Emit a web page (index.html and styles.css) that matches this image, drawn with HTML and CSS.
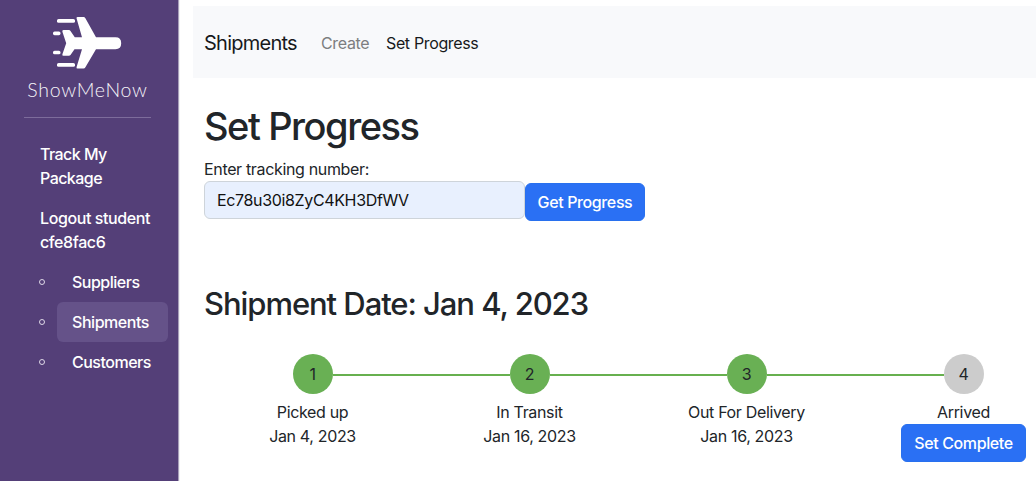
FILE: index.html
```html
<!DOCTYPE html>
<html lang="en">
<head>
<meta charset="utf-8">
<title>ShowMeNow</title>
<link rel="stylesheet" href="styles.css">
</head>
<body>
<div class="app">
  <aside class="sidebar">
    <div class="brand">
      <svg class="logo" width="70" height="54" viewBox="0 0 70 54">
        <g fill="#fff">
          <path d="M24.500 1h6q1.200 0 1.900 1.300L43 21.300H62.500q5.700 0 5.700 5.900t-5.700 6H43L32.400 51.200Q31.700 52.500 30.500 52.500h-6q-1.400 0-.9-1.600L29 33.200H21.500L17.500 39q-.6.700-1.600.7H10.500q-1.600 0-1.100-1.500l3.800-11L9.400 15.700q-.5-1.600 1.100-1.600h5.400q1 0 1.600.8l4.300 6.400H29L23.600 2.600q-.5-1.600.9-1.600z"/>
          <rect x="4" y="3" width="18" height="3.800" rx="1.600"/>
          <rect x="0" y="15.600" width="7.500" height="3.600" rx="1.600"/>
          <rect x="0" y="34.700" width="7.500" height="3.600" rx="1.600"/>
          <rect x="4" y="47" width="18" height="3.800" rx="1.600"/>
        </g>
      </svg>
      <div class="brand-name">ShowMeNow</div>
    </div>
    <nav class="menu">
      <a class="menu-link track">Track My<br>Package</a>
      <a class="menu-link logout">Logout student<br>cfe8fac6</a>
      <ul class="submenu">
        <li class="subitem"><a class="sublink suppliers">Suppliers</a></li>
        <li class="subitem"><a class="sublink active">Shipments</a></li>
        <li class="subitem"><a class="sublink customers">Customers</a></li>
      </ul>
    </nav>
  </aside>
  <main class="main">
    <nav class="navbar">
      <a class="nav-brand">Shipments</a>
      <a class="nav-link muted">Create</a>
      <a class="nav-link current">Set Progress</a>
    </nav>
    <section class="content">
      <h1 class="title">Set Progress</h1>
      <label class="label" for="tracking">Enter tracking number:</label>
      <div class="form-row">
        <input class="input" id="tracking" type="text" value="Ec78u30i8ZyC4KH3DfWV">
        <button class="btn get">Get Progress</button>
      </div>
      <h2 class="subtitle">Shipment Date: Jan 4, 2023</h2>
      <div class="steps">
        <div class="step">
          <div class="marker"><i class="line none"></i><span class="dot">1</span><i class="line"></i></div>
          <div class="name picked">Picked up</div>
          <div class="date">Jan 4, 2023</div>
        </div>
        <div class="step">
          <div class="marker"><i class="line"></i><span class="dot">2</span><i class="line"></i></div>
          <div class="name">In Transit</div>
          <div class="date">Jan 16, 2023</div>
        </div>
        <div class="step">
          <div class="marker"><i class="line"></i><span class="dot">3</span><i class="line"></i></div>
          <div class="name">Out For Delivery</div>
          <div class="date">Jan 16, 2023</div>
        </div>
        <div class="step">
          <div class="marker"><i class="line"></i><span class="dot pending">4</span><i class="line none"></i></div>
          <div class="name arrived">Arrived</div>
          <button class="btn complete">Set Complete</button>
        </div>
      </div>
    </section>
  </main>
</div>
</body>
</html>
```
FILE: styles.css
```css
* { box-sizing: border-box; }
body {
  margin: 0;
  overflow: hidden;
  background: #fff;
  color: #212529;
  font: 400 16px/24px Inter, "Liberation Sans", sans-serif;
  letter-spacing: -0.34px;
}
.app { display: flex; height: 481px; }
.sidebar {
  flex: none;
  width: 178px;
  background: #543f78;
  box-shadow: 1px 0 1px rgba(60, 40, 100, 0.45);
  color: #fff;
}
.brand {
  display: flex;
  flex-direction: column;
  align-items: center;
  width: 127px;
  height: 118px;
  margin-left: 24px;
  padding-top: 16px;
  border-bottom: 1px solid #7d6c9b;
}
.logo { flex: none; margin-left: 1px; }
.brand-name {
  margin-top: 8px;
  color: #f6f4f9;
  font: 300 19.5px/24px Lato, sans-serif;
  letter-spacing: 0.75px;
  white-space: nowrap;
}
.menu { padding-top: 16px; font-weight: 500; letter-spacing: -0.4px; }
.menu-link { display: block; padding: 8px 0 8px 40px; white-space: nowrap; }
.track { letter-spacing: -0.55px; }
.submenu { margin: 0; padding: 0; list-style: none; }
.subitem { display: flex; align-items: center; height: 40px; padding-left: 39px; }
.subitem::before {
  content: "";
  flex: none;
  box-sizing: border-box;
  width: 6px;
  height: 6px;
  margin-right: 12px;
  border: 1px solid #ddd7e6;
  border-radius: 50%;
}
.sublink { width: 111px; padding: 8px 15px; border-radius: 6px; letter-spacing: -0.5px; }
.active { background: #655289; letter-spacing: -0.45px; }
.main { flex: 1; min-width: 0; padding: 6px 0 0 15px; }
.navbar {
  display: flex;
  align-items: center;
  height: 72px;
  padding: 1px 0 0 11px;
  background: #f8f9fb;
}
.nav-brand { width: 117px; font-size: 20px; color: #17191b; letter-spacing: -0.75px; }
.nav-link { width: 65px; white-space: nowrap; }
.muted { color: #7d7e80; }
.current { width: auto; color: #17191b; letter-spacing: -0.36px; }
.content { padding: 24px 0 0 11px; }
.title { margin: 0 0 7px; font-size: 38px; line-height: 48px; font-weight: 500; letter-spacing: -1.45px; }
.label { display: block; }
.form-row { display: flex; align-items: flex-start; }
.input {
  width: 321px;
  height: 38px;
  padding: 6px 12px;
  border: 1px solid #ced4da;
  border-radius: 6px;
  background: #e8f0fe;
  color: #111;
  font: inherit;
  letter-spacing: -0.35px;
}
.btn {
  height: 38px;
  padding: 0;
  border: 1px solid #2870ee;
  border-radius: 6px;
  background: #2a70f4;
  color: #fff;
  font: inherit;
  font-weight: 500;
  letter-spacing: -0.38px;
}
.get { width: 120px; margin-top: 2px; }
.subtitle { margin: 64px 0 31px; font-size: 31px; line-height: 38px; font-weight: 500; letter-spacing: -1.06px; white-space: nowrap; }
.steps { display: grid; grid-template-columns: repeat(4, 217px); }
.step { text-align: center; }
.marker { display: flex; align-items: center; margin-bottom: 6px; }
.line { flex: 1; height: 2px; background: #67b04f; margin-top: 2px; }
.none { visibility: hidden; }
.dot { width: 40px; height: 40px; border-radius: 50%; background: #69b054; line-height: 40px; }
.pending { background: #ccc; }
.complete { width: 125px; }
```
